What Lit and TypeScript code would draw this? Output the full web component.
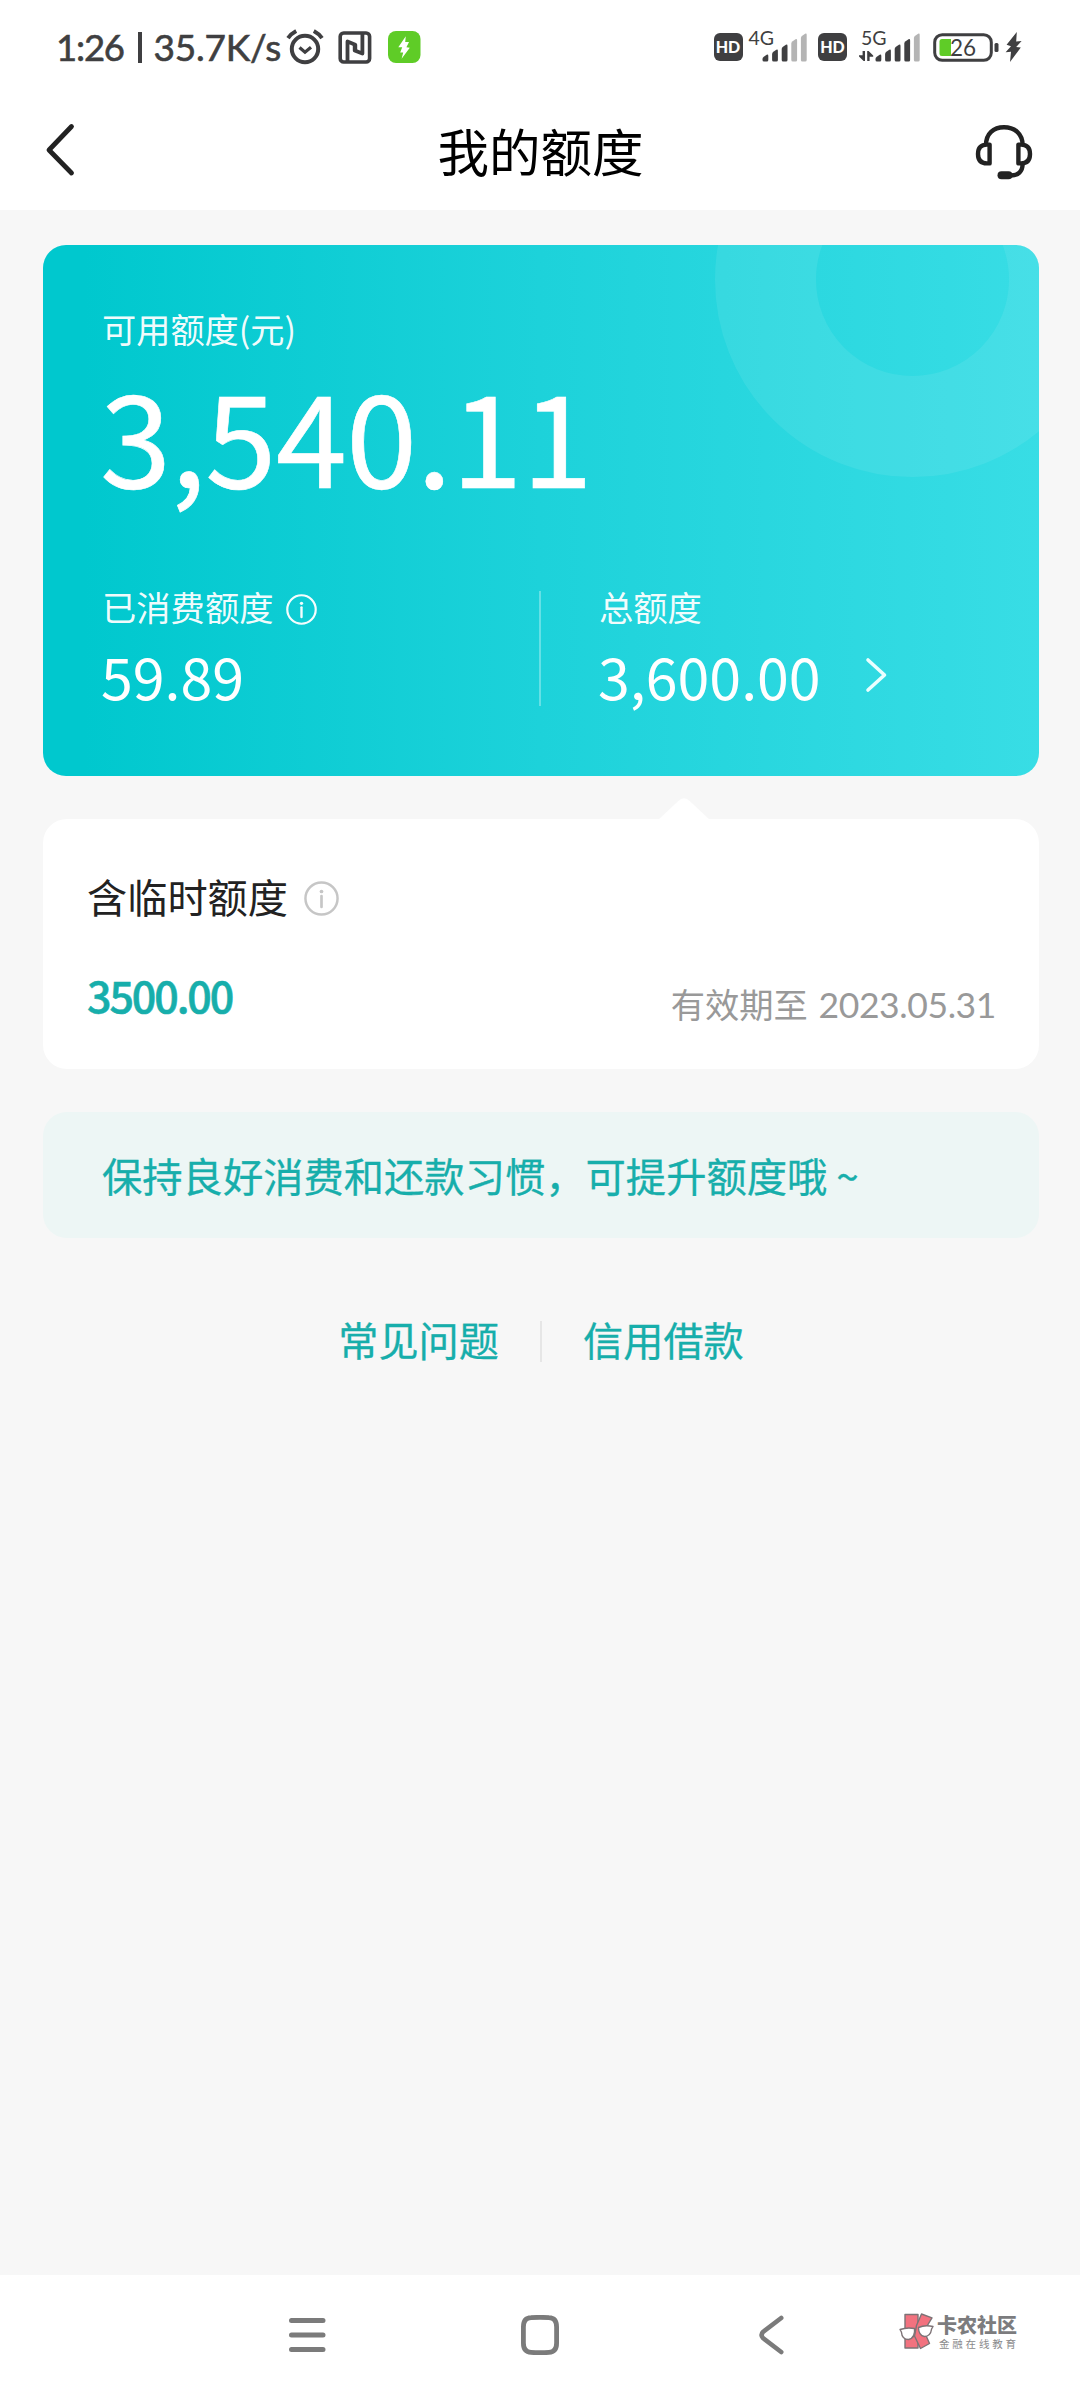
import { LitElement, html, css, svg } from "lit";
import { customElement, property } from "lit/decorators.js";

@customElement("info-icon")
class InfoIcon extends LitElement {
  static styles = css`
    :host { display: block; flex: none; }
    svg { display: block; width: 100%; height: 100%; }
  `;
  render() {
    return html`<svg viewBox="0 0 34 34" fill="none" stroke="currentColor">
      <circle cx="17" cy="17" r="15.6" stroke-width="2.4"></circle>
      <path d="M17 14.6V25.2" stroke-width="2.6" stroke-linecap="round"></path>
      <circle cx="17" cy="10.2" r="1.8" fill="currentColor" stroke="none"></circle>
    </svg>`;
  }
}

@customElement("signal-bars")
class SignalBars extends LitElement {
  @property({ type: Number }) level = 3;
  static styles = css`
    :host { display: block; flex: none; width: 45px; height: 29px; }
    svg { display: block; }
  `;
  render() {
    const tops = [21, 16, 11, 5.5, 0];
    return html`<svg width="45" height="29" viewBox="0 0 45 29">
      ${tops.map((t, i) => {
        const x = 0.5 + i * 9.6;
        return svg`<path fill=${i < this.level ? "#3f3f41" : "#b4b4b4"}
          d=${`M${x} 27V${t + 5}Q${x} ${t + 3.6} ${x + 1.3} ${t + 2.7}L${x + 4.2} ${t + 0.8}Q${x + 5.8} ${t} ${x + 5.8} ${t + 2}V27Q${x + 5.8} 28.5 ${x + 4.3} 28.5H${x + 1.5}Q${x} 28.5 ${x} 27Z`}></path>`;
      })}
    </svg>`;
  }
}

@customElement("status-bar")
class StatusBar extends LitElement {
  static styles = css`
    :host {
      display: flex; box-sizing: border-box; height: 89px; padding: 5px 57px 0 56px;
      align-items: center; color: #3f3f41; background: #fff;
      font-family: Lato, "Noto Sans", sans-serif; white-space: nowrap;
    }
    svg { display: block; flex: none; }
    .time { width: 82px; font-size: 36.5px; line-height: 44px; font-weight: 400; -webkit-text-stroke: 0.6px; letter-spacing: -1.2px; }
    .bar { width: 3.5px; height: 31px; background: #3f3f41; }
    .speed { margin-left: 12px; width: 132px; font-size: 37px; line-height: 44px; -webkit-text-stroke: 0.6px; letter-spacing: -0.2px; }
    .nfc { margin-left: 14px; }
    .charge { margin-left: 16px; }
    .spacer { flex: 1; }
    .hd {
      width: 29px; height: 28px; border-radius: 6px; background: #3f3f41; color: #fff; text-align: center;
      font-size: 16px; line-height: 28px; font-weight: 900; font-family: Lato, sans-serif;
    }
    .net { display: flex; height: 30px; align-items: flex-end; position: relative; }
    .gen { font-size: 19.5px; line-height: 20px; position: absolute; top: -4px; left: 0; }
    .four { margin-left: 6px; width: 58px; justify-content: flex-end; margin-right: 11.5px; }
    .five { margin-left: 12px; width: 61px; justify-content: flex-end; }
    .five .gen { left: 2px; }
    .battery { position: relative; margin-left: 13px; }
    .pct { position: absolute; left: 1px; top: 0; width: 58px; text-align: center; font-size: 22.5px; line-height: 29px; }
    .bolt { margin-left: 6px; }
  `;
  render() {
    return html`
      <span class="time">1:26</span><span class="bar"></span><span class="speed">35.7K/s</span>
      <svg width="38" height="36" viewBox="0 0 38 36" fill="none" stroke="#3f3f41">
        <circle cx="19" cy="20" r="13.2" stroke-width="4"></circle>
        <path d="M13.5 18.5L19 23.2L25 18.2" stroke-width="3.3"></path>
        <path d="M2 9.2Q5.2 4.6 10.2 2M27.8 2Q32.8 4.6 36 9.2" stroke-width="4"></path>
      </svg>
      <svg class="nfc" width="34" height="33" viewBox="0 0 34 33" fill="none" stroke="#3f3f41" stroke-linejoin="round">
        <rect x="2.2" y="2" width="29.4" height="29" rx="3.5" stroke-width="3.6"></rect>
        <path d="M9.5 32V10.5L17.3 13.7V20.6" stroke-width="3.8"></path>
        <path d="M24.4 1V22.6L16.7 19.4V14" stroke-width="3.8"></path>
      </svg>
      <svg class="charge" width="33" height="32" viewBox="0 0 33 32">
        <rect width="32.5" height="32" rx="8" fill="#5fcc27"></rect>
        <path d="M17.8 5.2L10.3 16.2H14.2L12.2 21.4H15.2L13.6 27.8L21.8 16.8L18.4 16.2L21 11H17.2Z" fill="#fff"></path>
      </svg>
      <span class="spacer"></span>
      <span class="hd">HD</span>
      <span class="net four"><span class="gen">4G</span><signal-bars .level=${3}></signal-bars></span>
      <span class="hd">HD</span>
      <span class="net five"><span class="gen">5G</span>
        <svg width="16" height="12" viewBox="0 0 16 12" fill="#3f3f41"><path d="M3.6 1H6V11H4.6L0 6.4V5.2H3.6ZM8.2 1H9.6L14.2 5.6V6.8H10.6V11H8.2Z"></path></svg>
        <signal-bars .level=${4}></signal-bars></span>
      <span class="battery">
        <svg width="66" height="29" viewBox="0 0 66 29">
          <rect x="1.7" y="1.7" width="56.6" height="25.6" rx="7.5" fill="none" stroke="#3f3f41" stroke-width="3"></rect>
          <path d="M9 6H18V23H9Q6.5 23 6.5 20.5V8.5Q6.5 6 9 6Z" fill="#5fcc27"></path>
          <rect x="61.5" y="10" width="4" height="9" rx="1.5" fill="#3f3f41"></rect>
        </svg>
        <span class="pct">26</span>
      </span>
      <svg class="bolt" width="18" height="30" viewBox="0 0 18 30" fill="#3f3f41">
        <path d="M11.8 0L1.6 12.8L6 14.3L0.6 20.2L6 19.8L5 30L15.8 15.6L11.2 15L16.6 9L11.2 9.6Z"></path>
      </svg>
    `;
  }
}

@customElement("title-bar")
class TitleBar extends LitElement {
  static styles = css`
    :host {
      display: flex; box-sizing: border-box; height: 121px; padding: 0 47px 0 45px; align-items: center;
      justify-content: space-between; background: #fff; color: #000;
    }
    svg { display: block; }
    .title { margin: 0; padding-left: 31px; font-size: 51.5px; line-height: 76px; font-weight: 400; }
    .service { margin-top: 5px; }
  `;
  render() {
    return html`
      <svg width="30" height="54" viewBox="0 0 30 54" fill="none" stroke="#222" stroke-width="4.8" stroke-linecap="round" stroke-linejoin="round">
        <path d="M26.5 3.5L4 27L26.5 50"></path>
      </svg>
      <h1 class="title">我的额度</h1>
      <svg class="service" width="58" height="56" viewBox="0 0 58 56" fill="none" stroke="#222" stroke-width="4.4" stroke-linejoin="round">
        <path d="M11 21C11 9.5 18.5 3.2 29 3.2S47.6 9.5 47.6 21"></path>
        <path d="M14.6 20.6H12C6 20.6 3 24 3 30S6 39.4 12 39.4H14.6Z"></path>
        <path d="M43.4 20.6H46C52 20.6 55 24 55 30S52 39.4 46 39.4H43.4Z"></path>
        <path d="M47.6 40C47.6 47.5 43 51.5 36 51.5" fill="none"></path>
        <rect x="22.5" y="47.3" width="15" height="8" rx="4" fill="#222" stroke="none"></rect>
      </svg>
    `;
  }
}

@customElement("quota-card")
class QuotaCard extends LitElement {
  static styles = css`
    :host {
      display: block; position: relative; overflow: hidden; box-sizing: border-box; height: 531px;
      padding: 58px 59px 0; border-radius: 23px; color: #fff;
      background: linear-gradient(90deg, #00c8ce 4%, #1dd2da 50%, #38dde5 100%);
    }
    .ring {
      position: absolute; box-sizing: border-box; left: 672px; top: -163px; width: 395px; height: 395px;
      border-radius: 50%; border: 101px solid rgba(255, 255, 255, 0.08);
    }
    .label { font-size: 34.2px; line-height: 50px; color: rgba(255, 255, 255, 0.96); }
    .total { margin: 3px 0 0 -2px; font-size: 128.3px; line-height: 152px; letter-spacing: -0.8px; -webkit-text-stroke: 0.6px; }
    .columns { display: flex; margin-top: 76px; }
    .used { width: 437px; }
    .rule { width: 2px; height: 115px; margin-top: 7px; background: rgba(255, 255, 255, 0.32); }
    .limit { padding-left: 58px; }
    .name { display: flex; align-items: center; font-size: 34.3px; line-height: 44px; color: rgba(255, 255, 255, 0.96); }
    .name info-icon { width: 31px; height: 31px; margin: 6px 0 0 12px; }
    .amount { display: flex; align-items: center; margin: 13px 0 0 -1px; font-size: 57.3px; line-height: 70px; }
    .amount svg { display: block; margin: -2px 0 0 43px; }
  `;
  render() {
    return html`
      <div class="ring"></div>
      <div class="label">可用额度(元)</div>
      <div class="total">3,540.11</div>
      <div class="columns">
        <div class="used">
          <div class="name">已消费额度<info-icon></info-icon></div>
          <div class="amount">59.89</div>
        </div>
        <div class="rule"></div>
        <div class="limit">
          <div class="name">总额度</div>
          <div class="amount">3,600.00
            <svg width="24" height="36" viewBox="0 0 24 36" fill="none" stroke="#eaffff" stroke-width="3.6" stroke-linecap="round" stroke-linejoin="round">
              <path d="M4 3L20.5 18L4 33"></path>
            </svg>
          </div>
        </div>
      </div>
    `;
  }
}

@customElement("temp-card")
class TempCard extends LitElement {
  static styles = css`
    :host {
      display: block; position: relative; box-sizing: border-box; height: 250px;
      padding: 49px 43px 0 44px; border-radius: 24px; background: #fff;
    }
    .notch { position: absolute; left: 616px; top: -21px; display: block; }
    .name { display: flex; align-items: center; font-size: 40.2px; line-height: 56px; color: #222; }
    .name info-icon { width: 35px; height: 35px; margin: 5px 0 0 16px; color: #c6c6c6; }
    .row { display: flex; justify-content: space-between; align-items: flex-start; margin-top: 40px; }
    .value { font-size: 43px; line-height: 60px; font-weight: 500; letter-spacing: -2.1px; color: #17aeab; -webkit-text-stroke: 0.6px; }
    .date { margin-top: 9px; font-size: 34.3px; line-height: 60px; color: #999; }
    .num { margin-left: 3px; font-family: Lato, sans-serif; font-size: 35.5px; letter-spacing: -0.4px; }
  `;
  render() {
    return html`
      <svg class="notch" width="50" height="21" viewBox="0 0 50 21" fill="#fff"><path d="M0 21L19 3.2Q25 -2.6 31 3.2L50 21Z"></path></svg>
      <div class="name">含临时额度<info-icon></info-icon></div>
      <div class="row">
        <span class="value">3500.00</span>
        <span class="date">有效期至 <span class="num">2023.05.31</span></span>
      </div>
    `;
  }
}

@customElement("nav-bar")
class NavBar extends LitElement {
  static styles = css`
    :host {
      display: flex; box-sizing: border-box; height: 125px; padding: 0 50px 5px 287px;
      align-items: center; background: #fff;
    }
    svg { display: block; flex: none; }
    .home { margin-left: 192px; }
    .back { margin-left: 196px; }
    .brand { display: flex; margin: -7px 0 0 112px; gap: 3px; align-items: center; color: #7c7c7e; white-space: nowrap; }
    .words { display: flex; flex-direction: column; gap: 1px; }
    .big { font-size: 20px; line-height: 22px; font-weight: 900; }
    .small { margin-left: 2px; font-size: 10.5px; line-height: 13px; letter-spacing: 2.8px; color: #8a8a8c; }
  `;
  render() {
    return html`
      <svg width="40" height="40" viewBox="0 0 40 40" stroke="#7b7b7b" stroke-width="5" stroke-linecap="round">
        <path d="M4.5 5.5H36M4.5 20H36M4.5 34.5H36"></path>
      </svg>
      <svg class="home" width="42" height="40" viewBox="0 0 42 40" fill="none" stroke="#7b7b7b" stroke-width="4.8">
        <path d="M4.4 12Q4.4 3 12 2.7Q21 2 30 2.7Q37.6 3 37.6 12V28Q37.6 37 30 37.3Q21 38 12 37.3Q4.4 37 4.4 28Z"></path>
      </svg>
      <svg class="back" width="30" height="40" viewBox="0 0 30 40" fill="none" stroke="#7b7b7b" stroke-width="4.6" stroke-linecap="round">
        <path d="M24.2 3L6 17Q3 20 6 23L24.2 37"></path>
      </svg>
      <div class="brand">
        <svg width="35" height="37" viewBox="0 0 35 37" stroke="#7d7376" stroke-width="1.4" stroke-linejoin="round">
          <path d="M6 1.5H19V35H6Z" fill="#f2727f"></path>
          <path d="M17.5 12.5L22.5 1L33 4.8L25 18L30.5 30.5L21.5 35.5L15.5 23Z" fill="#f2727f"></path>
          <path d="M1 16.5Q8 14 15.5 15.5Q16.5 25 9.5 26.5Q3 26.5 2.4 19Z" fill="#fff"></path>
          <path d="M19.5 14.5Q26 11.5 34 13.5L32.6 16Q31.5 23.5 25.5 23.5Q19.5 22.5 19.5 14.5Z" fill="#fff"></path>
        </svg>
        <div class="words"><span class="big">卡农社区</span><span class="small">金融在线教育</span></div>
      </div>
    `;
  }
}

@customElement("app-root")
class AppRoot extends LitElement {
  static styles = css`
    :host {
      display: flex; flex-direction: column; width: 1080px; height: 2400px; overflow: hidden;
      background: #f7f7f7; font-family: "Noto Sans CJK SC", sans-serif;
    }
    .content { flex: 1; display: flex; flex-direction: column; gap: 43px; padding: 35px 41px 0 43px; }
    .tip {
      height: 126px; box-sizing: border-box; padding-left: 59px; border-radius: 24px; background: #edf6f5;
      color: #17aeab; font-size: 40.3px; line-height: 125px; white-space: pre; -webkit-text-stroke: 0.3px;
    }
    .links {
      display: flex; justify-content: center; align-items: center; margin-top: 30px;
      color: #17aeab; font-size: 40.2px; line-height: 56px; -webkit-text-stroke: 0.3px;
    }
    .sep { width: 2px; height: 41px; margin: 4px 41px 0; background: #e6e6e6; }
  `;
  render() {
    return html`
      <status-bar></status-bar>
      <title-bar></title-bar>
      <main class="content">
        <quota-card></quota-card>
        <temp-card></temp-card>
        <div class="tip">保持良好消费和还款习惯，可提升额度哦 ~</div>
        <nav class="links"><span>常见问题</span><span class="sep"></span><span>信用借款</span></nav>
      </main>
      <nav-bar></nav-bar>
    `;
  }
}
